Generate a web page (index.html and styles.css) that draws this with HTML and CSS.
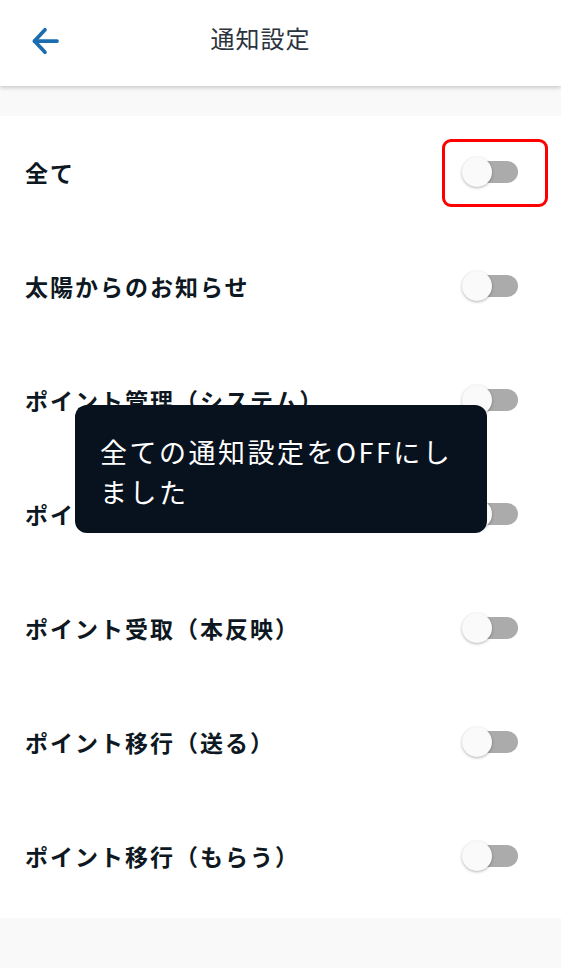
FILE: index.html
```html
<!DOCTYPE html>
<html lang="ja">
<head>
  <meta charset="UTF-8" />
  <meta name="viewport" content="width=device-width, initial-scale=1.0"/>
  <title>通知設定</title>
  <link rel="stylesheet" href="styles.css">
</head>
<body>

<header class="topbar">
  <button class="back" aria-label="戻る">
    <svg width="36" height="36" viewBox="0 0 24 24" fill="none" stroke="#1b6db0" stroke-width="2.5" stroke-linecap="round" stroke-linejoin="round">
      <path d="M20 12H5"/>
      <path d="M12 4.5l-7 7.5 7 7.5"/>
    </svg>
  </button>
  <div class="title">通知設定</div>
</header>

<div class="gap"></div>

<!-- Settings list -->
<div class="list">
  <div class="row">
    <span class="label">全て</span>
    <div class="mark"><span class="switch"></span></div>
  </div>
  <div class="row">
    <span class="label">太陽からのお知らせ</span>
    <span class="switch"></span>
  </div>
  <div class="row">
    <span class="label">ポイント管理（システム）</span>
    <span class="switch"></span>
  </div>
  <div class="row">
    <span class="label">ポイント受取（仮反映）</span>
    <span class="switch"></span>
  </div>
  <div class="row">
    <span class="label">ポイント受取（本反映）</span>
    <span class="switch"></span>
  </div>
  <div class="row">
    <span class="label">ポイント移行（送る）</span>
    <span class="switch"></span>
  </div>
  <div class="row">
    <span class="label">ポイント移行（もらう）</span>
    <span class="switch"></span>
  </div>
</div>

<div class="toast">全ての通知設定をOFFにしました</div>

</body>
</html>
```

FILE: styles.css
```css
* { box-sizing: border-box; margin: 0; padding: 0; }

body {
  font-family: "Noto Sans CJK JP", "Noto Sans", sans-serif;
  background: #f9f9f9;
  width: 561px;
  min-height: 968px;
  position: relative;
}

.topbar {
  height: 86px;
  background: #fff;
  display: flex;
  align-items: center;
  position: relative;
  box-shadow: 0 2px 4px rgba(0,0,0,0.18);
  z-index: 1;
}

.back {
  width: 40px;
  height: 40px;
  margin-left: 25px;
  margin-top: -4px;
  background: none;
  border: none;
  display: flex;
  align-items: center;
  justify-content: center;
}

.title {
  position: absolute;
  left: 0;
  right: 40px;
  top: 20px;
  text-align: center;
  font-size: 24px;
  letter-spacing: 1px;
  color: #2b333c;
  pointer-events: none;
}

.gap { height: 30px; }

.list {
  background: #fff;
  padding-bottom: 4px;
}

.row {
  height: 114px;
  display: flex;
  align-items: center;
  justify-content: space-between;
  padding: 0 43px 3px 25px;
}

.label {
  font-size: 23px;
  font-weight: bold;
  letter-spacing: 2px;
  color: #0e1822;
}

.switch {
  position: relative;
  width: 54px;
  height: 22px;
  border-radius: 11px;
  background: #ababab;
  display: block;
}

.switch::before {
  content: "";
  position: absolute;
  left: -2px;
  top: -4px;
  width: 30px;
  height: 30px;
  border-radius: 50%;
  background: #fafafa;
  box-shadow: 0 1px 3px rgba(0,0,0,0.3);
}

/* red highlight round the first switch */
.mark {
  margin-right: -30px;
  margin-bottom: -3px;
  padding: 19px 27px 21px 19px;
  border: 3px solid #ff0000;
  border-radius: 9px;
}

.toast {
  position: absolute;
  left: 75px;
  top: 405px;
  width: 412px;
  height: 128px;
  background: #07121e;
  border-radius: 12px;
  color: #fff;
  font-size: 27px;
  letter-spacing: 2.5px;
  line-height: 40px;
  padding: 27px 24px 0 25px;
  z-index: 2;
}
```
